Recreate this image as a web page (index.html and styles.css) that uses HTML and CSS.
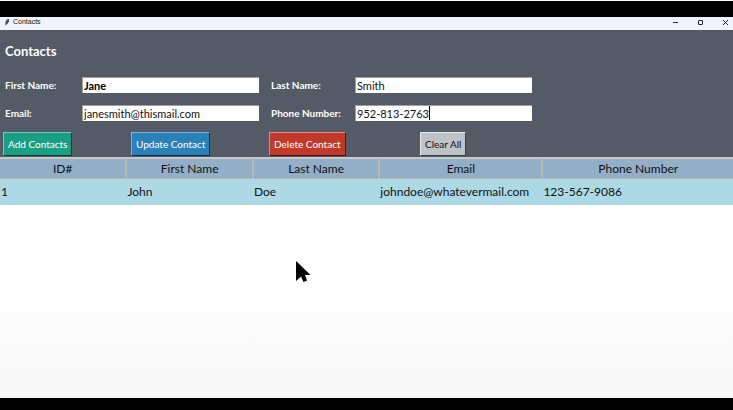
FILE: index.html
```html
<!DOCTYPE html>
<html lang="en">
<head>
<meta charset="utf-8">
<title>Contacts</title>
<link rel="stylesheet" href="styles.css">
</head>
<body>
<header class="titlebar">
  <svg class="feather" viewBox="0 0 8 10" aria-hidden="true"><path d="M6 0C3 1 1 4 2 8L1 10L3 8C5 7 8 3 6 0Z" fill="#2c4a70"/><path d="M5 1C3 3 2 5 2 8" stroke="#7f9fc4" stroke-width=".8" fill="none"/></svg>
  <span class="title">Contacts</span>
  <div class="window-controls">
    <button type="button" aria-label="Minimize"><svg viewBox="0 0 7 7"><path d="M1 3.5H6" /></svg></button>
    <button type="button" aria-label="Maximize"><svg viewBox="0 0 7 7"><rect x="1.5" y="1.5" width="4" height="4" rx=".5"/></svg></button>
    <button type="button" aria-label="Close"><svg viewBox="0 0 7 7"><path d="M1 1L6 6M6 1L1 6"/></svg></button>
  </div>
</header>
<form class="panel">
  <h1>Contacts</h1>
  <div class="fields">
    <label for="first">First Name:</label>
    <input id="first" class="strong" type="text" value="Jane">
    <label for="last">Last Name:</label>
    <input id="last" type="text" value="Smith">
    <label for="email">Email:</label>
    <input id="email" type="text" value="janesmith@thismail.com">
    <label for="phone">Phone Number:</label>
    <div class="phone-box"><input id="phone" type="text" value="952-813-2763"><span class="caret"></span></div>
  </div>
  <div class="actions">
    <button type="button" class="add">Add Contacts</button>
    <button type="button" class="update">Update Contact</button>
    <button type="button" class="delete">Delete Contact</button>
    <button type="button" class="clear">Clear All</button>
  </div>
</form>
<main class="list">
  <table>
    <colgroup><col class="c-id"><col class="c-name"><col class="c-name"><col class="c-email"><col></colgroup>
    <thead><tr><th>ID#</th><th>First Name</th><th>Last Name</th><th>Email</th><th>Phone Number</th></tr></thead>
    <tbody><tr><td>1</td><td>John</td><td>Doe</td><td>johndoe@whatevermail.com</td><td>123-567-9086</td></tr></tbody>
  </table>
  <svg class="pointer" viewBox="0 0 15 21" aria-hidden="true"><path d="M0 0L14.500 14H9L11 19.500L7.500 21L5 15.500L0 20Z"/></svg>
</main>
</body>
</html>
```
FILE: styles.css
```css
* { box-sizing: border-box; }
html { background: #fff; }
body {
  margin: 0;
  min-height: 100vh;
  display: flex;
  flex-direction: column;
  font-family: Lato, "Open Sans", sans-serif;
  font-size: 10px;
  color: #111;
  border-bottom: 12px solid #000;
}
body::before { content: ""; height: 16px; margin-top: 1px; background: #000; }
.titlebar {
  display: flex;
  align-items: center;
  gap: 3px;
  height: 13px;
  padding: 0 4px 3px;
  background: #f0f3fb;
}
.feather { width: 6px; height: 9px; }
.title { font-family: "Liberation Sans", sans-serif; font-size: 7px; line-height: 10px; }
.window-controls { display: flex; gap: 18px; margin-left: auto; }
.window-controls button { display: flex; padding: 0; border: 0; background: none; }
.window-controls svg { width: 7px; height: 7px; fill: none; stroke: #222; stroke-width: 1; }

.panel { background: #545b66; padding: 13px 0 1px; }
h1 { margin: 0 0 18px 5px; font-size: 13px; line-height: 16px; color: #fff; }
.fields {
  display: grid;
  grid-template-columns: 77px minmax(60px, 177px) 96px minmax(60px, 177px);
  row-gap: 12px;
  padding-left: 5px;
  align-items: center;
}
label { color: #fff; font-weight: 700; line-height: 16px; white-space: nowrap; }
.fields > label:nth-of-type(even) { padding-left: 12px; }
input {
  display: block;
  width: 100%;
  height: 16px;
  padding: 0 1px;
  border: 1px solid #a0a0a0;
  border-width: 1px 0 0 1px;
  border-radius: 0;
  outline: 0;
  background: #fff;
  color: #111;
  font: inherit;
  font-size: 11px;
}
.strong { font-weight: 700; color: #000; }
.phone-box { position: relative; }
.caret { position: absolute; left: 74px; top: 1px; width: 1px; height: 14px; background: #000; }

.actions {
  display: grid;
  grid-template-columns: 128px 138px 151px auto;
  justify-items: start;
  padding: 11px 0 0 3px;
}
.actions button {
  height: 24px;
  padding: 0 4px;
  border: 1px solid;
  border-radius: 0;
  font: inherit;
  color: #fff;
  white-space: nowrap;
}
.actions .add { background: #1b9f84; border-color: #74c7b5 #0b4036 #0b4036 #74c7b5; }
.actions .update { background: #2a80b9; border-color: #7db3d8 #11334a #11334a #7db3d8; }
.actions .delete { background: #c0392b; border-color: #dd8a82 #4d1711 #4d1711 #dd8a82; }
.actions .clear { background: #bdc3c7; border-color: #e4e8ea #3d4042 #3d4042 #e4e8ea; color: #111; }

.list { position: relative; flex: 1; background: linear-gradient(#fff 50%, #f7f7f7); }
table { width: 100%; table-layout: fixed; border-collapse: separate; border-spacing: 0; font-size: 12px; }
.c-id, .c-name { width: 17.25%; }
.c-email { width: 22.25%; }
th {
  height: 22px;
  padding: 0;
  background: #92afc7;
  border: 1px solid #b9b8b4;
  border-top: 2px solid #c9c8c4;
  border-left-width: 0;
  font-weight: 400;
  line-height: 16px;
}
th + th { border-left-width: 1px; }
th:last-child { border-right-width: 0; }
td { height: 26px; padding: 0 1px; background: #add8e6; line-height: 18px; white-space: nowrap; }
.pointer { position: absolute; left: 296px; top: 104px; width: 15px; height: 21px; fill: #000; }
```
